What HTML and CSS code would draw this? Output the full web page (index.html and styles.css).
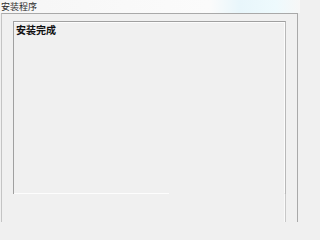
FILE: index.html
```html
<!DOCTYPE html>
<html lang="zh-CN">
<head>
<meta charset="utf-8">
<title>安装程序</title>
<link rel="stylesheet" href="styles.css">
</head>
<body>
<div class="screen">
  <div class="titlebar"><span class="title">安装程序</span></div>
  <div class="frame">
    <div class="panel">
      <div class="panel-inner">
        <div class="heading">安装完成</div>
      </div>
    </div>
    <div class="rest"><div class="rest-inner"></div></div>
  </div>
</div>
</body>
</html>
```
FILE: styles.css
```css
html, body {
  margin: 0;
  padding: 0;
  background: #f0f0f0;
}
.screen {
  width: 300px;
  height: 222px;
  overflow: hidden;
  display: flex;
  flex-direction: column;
  background: #f0f0f0;
}
.titlebar {
  height: 13px;
  flex: none;
  box-sizing: border-box;
  padding-top: 1px;
  background: linear-gradient(to right, #f6f6f6 0%, #fbfbfb 70%, #e8f6fb 80%, #eefafd 92%, #f7f7f7 100%);
  display: flex;
  align-items: flex-start;
}
.title {
  font-family: "Noto Sans CJK SC", sans-serif;
  font-size: 9px;
  line-height: 11px;
  color: #2a2a2a;
  padding-left: 1px;
}
.frame {
  flex: 1;
  margin-left: 1px;
  width: 297px;
  box-sizing: border-box;
  border-top: 1px solid #a9a9a9;
  border-left: 1px solid #c4c4c4;
  border-right: 1px solid #a9a9a9;
  padding: 7px 11px 0 11px;
  background: #f0f0f0;
  display: flex;
  flex-direction: column;
}
.panel {
  height: 173px;
  flex: none;
  box-sizing: border-box;
  border-top: 1px solid #a0a0a0;
  border-left: 1px solid #a0a0a0;
  border-right: 1px solid #b8b8b8;
  padding-bottom: 1px;
  background: linear-gradient(#fdfdfd, #fdfdfd) no-repeat left bottom / 155px 1px;
}
.panel-inner {
  height: 100%;
  box-sizing: border-box;
  border-top: 1px solid #fcfcfc;
  border-right: 1px solid #fcfcfc;
  padding: 1px 2px;
}
.heading {
  font-family: "Noto Sans CJK SC", sans-serif;
  font-weight: bold;
  font-size: 10px;
  line-height: 11px;
  color: #111111;
}
.rest {
  flex: 1;
  display: flex;
  justify-content: flex-end;
  border-right: 1px solid #c8c8c8;
}
.rest-inner {
  width: 1px;
  background: #fafafa;
}
```
